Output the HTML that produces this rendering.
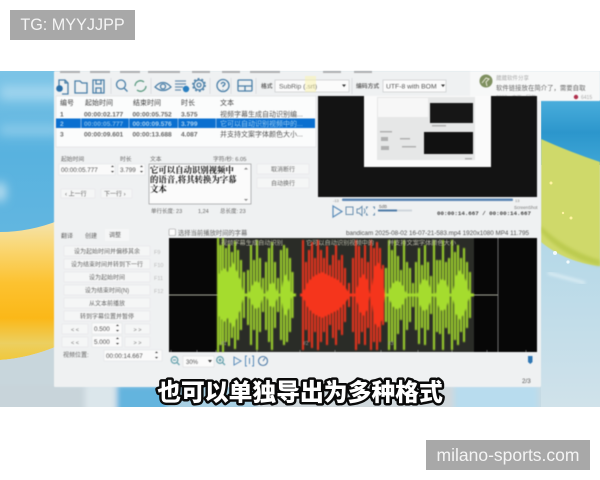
<!DOCTYPE html>
<html><head><meta charset="utf-8"><style>
html,body{margin:0;padding:0;background:#fff}
body{width:600px;height:480px;overflow:hidden;position:relative;font-family:"Liberation Sans","Noto Sans CJK SC",sans-serif}
.wm{position:absolute;background:#a8a8a8;color:#f4f4f4;font-size:17.5px;line-height:30px;height:30px;text-align:center}
svg{position:absolute;left:0;top:0}
text{font-family:"Liberation Sans","Noto Sans CJK SC",sans-serif;fill:#444;font-size:7px}
.m{font-size:6.6px;fill:#666;font-weight:bold}
.btn{fill:#f5f6f6;stroke:#e6e7e8;stroke-width:.6}
.ic{fill:none;stroke:#4a7fa8;stroke-width:1.3}
#win{filter:blur(.5px)}
</style></head><body>
<svg width="600" height="480" viewBox="0 0 600 480">
<defs>
<filter id="b6"><feGaussianBlur stdDeviation="5"/></filter>
<filter id="b3"><feGaussianBlur stdDeviation="3"/></filter>
<filter id="b2"><feGaussianBlur stdDeviation="1.5"/></filter>
<filter id="b1"><feGaussianBlur stdDeviation=".5"/></filter>
<clipPath id="band"><rect x="0" y="71" width="600" height="336"/></clipPath>
<linearGradient id="sky" x1="0" y1="0" x2="0" y2="1"><stop offset="0" stop-color="#7cc4e6"/><stop offset=".5" stop-color="#58b2df"/><stop offset="1" stop-color="#62b6e0"/></linearGradient>
<linearGradient id="or" x1="0" y1="0" x2="0" y2="1"><stop offset="0" stop-color="#f4e4b0"/><stop offset=".18" stop-color="#f9d878"/><stop offset=".45" stop-color="#fcc230"/><stop offset=".7" stop-color="#fbb818"/><stop offset=".88" stop-color="#eccf60"/><stop offset="1" stop-color="#f0c83c"/></linearGradient>
<linearGradient id="pale" x1="0" y1="0" x2="0" y2="1"><stop offset="0" stop-color="#b4d8e8"/><stop offset="1" stop-color="#d0e2ea"/></linearGradient>
<linearGradient id="bt" x1="0" y1="0" x2="0" y2="1"><stop offset="0" stop-color="#4aaedc"/><stop offset=".5" stop-color="#2c96cc"/><stop offset="1" stop-color="#3ea6d6"/></linearGradient>
</defs>
<g clip-path="url(#band)">
<rect x="0" y="71" width="600" height="336" fill="#cfe0ea"/>
<rect x="0" y="71" width="60" height="165" fill="url(#sky)"/>
<g filter="url(#b6)">
<path d="M0 85H60V100H0Z" fill="#9ed4ee"/>
<path d="M0 125H60V135H0Z" fill="#8bcbea"/>
<ellipse cx="0" cy="192" rx="6" ry="10" fill="#bfe0f0"/>
</g>
<path d="M0 232Q30 232 60 220V345Q30 358 0 360Z" fill="url(#or)"/>
<path d="M0 360Q30 358 60 345V407H0Z" fill="#c8d6dc"/>
<g filter="url(#b3)">
<rect x="-10" y="385" width="95" height="30" fill="#c8d4da"/>
<rect x="85" y="385" width="30" height="30" fill="#dbe6eb"/>
<rect x="117" y="385" width="50" height="30" fill="#64b4de"/>
<rect x="167" y="385" width="90" height="30" fill="#a8cfe2"/>
<rect x="257" y="385" width="197" height="30" fill="#d0d8dc"/>
<rect x="454" y="385" width="84" height="30" fill="#b8dcee"/>
<rect x="538" y="385" width="70" height="30" fill="#c8dae2"/>
</g>
<rect x="541" y="100" width="59" height="65" fill="url(#bt)"/>
<rect x="541" y="240" width="59" height="167" fill="url(#pale)"/>
<path d="M541 139Q570 152 600 162V266Q565 262 541 242Z" fill="#cfd96a" filter="url(#b1)"/>
<path d="M541 232Q565 258 600 266V260Q565 250 541 226Z" fill="#bccb50" filter="url(#b2)"/>
<path d="M548 273L585 283" stroke="#e8f4f8" stroke-width="2" filter="url(#b2)"/>
<circle cx="551" cy="183" r="1.500" fill="#fff3a0"/><circle cx="571" cy="218" r="1.500" fill="#fff3a0"/><circle cx="563" cy="213" r="1.200" fill="#fff3a0"/>
<circle cx="555" cy="253" r="2" fill="#f2fafc"/><circle cx="568" cy="262" r="1.600" fill="#f2fafc"/>
</g>

<g id="win">
<rect x="54" y="71" width="487" height="316" rx="1" fill="#eff1f2"/>
<rect x="470" y="71" width="130" height="30" fill="#f7f8f8"/>

<!-- menu remnants -->
<g fill="#888" opacity=".6"><rect x="60" y="71" width="20" height="2"/><rect x="90" y="71" width="20" height="2"/><rect x="120" y="71" width="20" height="2"/><rect x="148" y="71" width="32" height="2"/><rect x="192" y="71" width="18" height="2"/><rect x="222" y="71" width="18" height="2"/><rect x="250" y="71" width="30" height="2"/><rect x="323" y="71" width="18" height="2"/><rect x="354" y="71" width="18" height="2"/></g>

<!-- toolbar icons -->
<g class="ic">
<path d="M59 90V80h6l3 3v11h-6"/><path d="M65 80v3h3"/>
<path d="M75 93V81h5l2 2h5v10z"/>
<path d="M93 80h11v13H93z M96 80v4h5v-4 M96 93v-5h5v5"/>
<circle cx="121" cy="84.500" r="4.500"/><path d="M124 88l3.500 3.500"/>
<path d="M135 86a5.500 5.500 0 0 1 9-4M146 86a5.500 5.500 0 0 1-9 4" stroke="#5a9a80"/>
<path d="M155 87q8-9 16 0q-8 7-16 0z"/><circle cx="163" cy="86.500" r="2.500"/>
<path d="M175 81h11M175 84h11M175 87h8M175 90h6" stroke="#6a90ae"/>
<circle cx="199" cy="85" r="5"/><circle cx="199" cy="85" r="2"/><circle cx="199" cy="85" r="6.300" stroke-dasharray="2 2"/>
<circle cx="223" cy="85.500" r="6"/><path d="M221 84q2-3 4-.500q0 1.500-2 2.500v1M223 89.500v.6"/>
<rect x="238" y="80" width="14" height="11" rx="1"/><path d="M238 86h14M245 86v5"/>
</g>
<circle cx="59.500" cy="88.500" r="3.300" fill="#2a6fa8"/>
<circle cx="186" cy="89" r="3.200" fill="#2a7fc0"/>
<path d="M111 78v16M151 78v16M210 78v16M231 78v16M256 78v16M352 78v16" stroke="#d5d8da" stroke-width=".7"/>

<text x="261" y="88" class="m" style="font-size:5.800px">格式</text>
<rect x="275" y="80" width="74" height="12" fill="#fbfbfb" stroke="#c8cacc" stroke-width=".7"/>
<text x="279" y="88.500" style="font-size:6.800px;fill:#666">SubRip (.srt)</text>
<rect x="305" y="76" width="11" height="16" fill="#fbf3a8" opacity=".5"/>
<path d="M342 84.500h4l-2 2.500z" fill="#333"/>
<text x="356" y="88" class="m" style="font-size:5.800px">编码方式</text>
<rect x="383" y="80" width="63" height="12" fill="#fbfbfb" stroke="#c8cacc" stroke-width=".7"/>
<text x="386" y="88.500" style="font-size:6.800px;fill:#555">UTF-8 with BOM</text>
<path d="M441 84.500h4l-2 2.500z" fill="#333"/>

<!-- post overlay -->
<circle cx="486" cy="81" r="6.500" fill="#7f9060"/>
<path d="M482 83l4-5 3 1-3 3 1 4" stroke="#e8e8d8" stroke-width="1" fill="none"/>
<text x="496" y="80" style="font-size:5.500px;fill:#aaa">葳葳软件分享</text>
<text x="496" y="90" style="font-size:6.400px;fill:#666">软件链接放在简介了，需要自取</text>
<text x="496" y="99" style="font-size:5px;fill:#bbb">2008 · 广西 · 回复</text>
<circle cx="576" cy="97" r="2.200" fill="#b0304c"/>
<text x="581" y="99" style="font-size:5px;fill:#aaa">6415</text>

<!-- table -->
<rect x="56" y="96" width="260" height="51" fill="#fbfcfc" stroke="#dcdee0" stroke-width=".6"/>
<text x="60" y="105" style="font-size:7px">编号</text><text x="85" y="105" style="font-size:7px">起始时间</text><text x="133" y="105" style="font-size:7px">结束时间</text><text x="181" y="105" style="font-size:7px">时长</text><text x="220" y="105" style="font-size:7px">文本</text>
<text x="60" y="116.500" class="m">1</text><text x="84" y="116.500" class="m">00:00:02.177</text><text x="132.500" y="116.500" class="m">00:00:05.752</text><text x="181" y="116.500" class="m">3.575</text><text x="220" y="116.500" style="font-size:7px;fill:#555">视频字幕生成自动识别编...</text>
<rect x="56" y="118.500" width="259" height="9.500" fill="#0a6fd0"/>
<path d="M81 118.500v9.500M129 118.500v9.500M178 118.500v9.500M216 118.500v9.500" stroke="#cfe2f4" stroke-width=".6"/>
<text x="60" y="126" class="m" style="fill:#9cc8ee">2</text><text x="84" y="126" class="m" style="fill:#7ab6e8">00:00:05.777</text><text x="132.500" y="126" class="m" style="fill:#a8d0f0">00:00:09.576</text><text x="181" y="126" class="m" style="fill:#a8d0f0">3.799</text><text x="220" y="126" style="font-size:7px;fill:#9accf2">它可以自动识别视频中的...</text>
<text x="60" y="136.500" class="m">3</text><text x="84" y="136.500" class="m">00:00:09.601</text><text x="132.500" y="136.500" class="m">00:00:13.688</text><text x="181" y="136.500" class="m">4.087</text><text x="220" y="136.500" style="font-size:7px;fill:#555">并支持文案字体颜色大小...</text>

<!-- edit area -->
<text x="61" y="161" style="font-size:5.800px;fill:#666">起始时间</text>
<text x="120" y="161" style="font-size:5.800px;fill:#666">时长</text>
<text x="150" y="161" style="font-size:5.800px;fill:#666">文本</text>
<text x="213" y="161" style="font-size:5.800px;fill:#666">字符/秒: 6.05</text>
<rect x="59" y="164" width="56" height="11" fill="#fafafa" stroke="#dfe1e2" stroke-width=".5"/>
<text x="61" y="171.800" style="font-size:6.300px;fill:#555">00:00:05.777</text>
<path d="M111 167l1.500-1.500 1.500 1.500zM111 171h3l-1.500 1.500z" fill="#333"/>
<rect x="118" y="164" width="27" height="11" fill="#fafafa" stroke="#dfe1e2" stroke-width=".5"/>
<text x="120" y="171.800" style="font-size:6.300px;fill:#555">3.799</text>
<path d="M140 167l1.500-1.500 1.500 1.500zM140 171h3l-1.500 1.500z" fill="#333"/>
<rect x="149" y="164" width="102" height="40" fill="#fbfbfb" stroke="#8a8c8e" stroke-width=".6"/>
<text x="150" y="173" style="font-size:8.400px;fill:#111;font-family:'Noto Serif CJK SC',serif;font-weight:bold">它可以自动识别视频中</text>
<text x="150" y="182.500" style="font-size:8.400px;fill:#111;font-family:'Noto Serif CJK SC',serif;font-weight:bold">的语音,将其转换为字幕</text>
<text x="150" y="192" style="font-size:8.400px;fill:#111;font-family:'Noto Serif CJK SC',serif;font-weight:bold">文本</text>
<path d="M244 169.500h4l-2-2zM244 199h4l-2 2z" fill="#888"/>
<text x="151" y="213" style="font-size:5.500px;fill:#666">单行长度: 23</text><text x="198" y="213" style="font-size:5.500px;fill:#666">1,24</text><text x="220" y="213" style="font-size:5.500px;fill:#666">总长度: 23</text>
<rect x="61" y="189" width="34" height="9" class="btn"/><text x="65" y="196" style="font-size:6px;fill:#666">‹ 上一行</text>
<rect x="101" y="189" width="31" height="9" class="btn"/><text x="104" y="196" style="font-size:6px;fill:#666">下一行 ›</text>
<rect x="257" y="164" width="52" height="10" class="btn"/><text x="271" y="171.500" style="font-size:6px;fill:#666">取消断行</text>
<rect x="257" y="178" width="52" height="10" class="btn"/><text x="271" y="185.500" style="font-size:6px;fill:#666">自动换行</text>

<!-- video -->
<rect x="318" y="96" width="219" height="101" fill="#131313"/>
<rect x="364" y="96" width="127" height="71" fill="#fafafa"/>
<rect x="377" y="97" width="98" height="63" fill="#e6e7e7"/>
<rect x="378" y="98" width="50" height="19" fill="#f7f7f7"/>
<rect x="430" y="103" width="43" height="20" fill="#161616"/>
<rect x="424" y="132" width="49" height="22" fill="#111"/>
<g fill="#b0b0b0"><rect x="380" y="131" width="12" height="1.500"/><rect x="381" y="137" width="7" height="4"/><rect x="381" y="146" width="8" height="4"/><rect x="400" y="138" width="10" height="1.500"/><rect x="402" y="146" width="14" height="1.500"/><rect x="432" y="125" width="14" height="1.500"/><rect x="465" y="158" width="7" height="1.500"/></g>

<text x="333" y="202" style="font-size:4px;fill:#888">-13</text>
<rect x="342" y="198.500" width="171" height="2.500" rx="1" fill="#5b86b4"/>
<text x="515" y="202" style="font-size:4px;fill:#888">13</text>
<path d="M333 206l9 5.500-9 5.500z" fill="none" stroke="#5a8cba" stroke-width="1.200"/>
<rect x="346" y="207" width="7" height="7.500" fill="none" stroke="#6a90b0" stroke-width="1"/>
<path d="M357 209h2l3-2.500v9l-3-2.500h-2z M364 208.500q2 2.500 0 5" fill="none" stroke="#6a90b0" stroke-width="1"/>
<path d="M368 207h-1.500v2M373 207h1.500v2M368 215h-1.500v-2M373 215h1.500v-2" fill="none" stroke="#6a90b0" stroke-width="1"/>
<text x="379" y="208" style="font-size:4.500px;fill:#666">5dB</text>
<rect x="378" y="209.500" width="34" height="2" fill="#cfd6dc"/><rect x="378" y="209.500" width="19" height="2" fill="#4f7ca8"/>
<text x="514" y="209" style="font-size:4.500px;fill:#777">ScreenShot</text>
<text x="437" y="215" style="font-size:5.800px;fill:#444;font-weight:bold;font-family:'Liberation Mono',monospace">00:00:14.667 / 00:00:14.667</text>

<!-- waveform head -->
<rect x="169" y="229" width="6.500" height="6.500" rx="1" fill="#fdfdfd" stroke="#999" stroke-width=".6"/>
<text x="178" y="235" style="font-size:6.300px;fill:#666">选择当前播放时间的字幕</text>
<text x="346" y="235" style="font-size:6.300px;fill:#555">bandicam 2025-08-02 16-07-21-583.mp4 1920x1080 MP4 11.795</text>

<!-- tabs -->
<text x="61" y="238" style="font-size:6px;fill:#666">翻译</text>
<text x="85" y="238" style="font-size:6px;fill:#666">创建</text>
<rect x="105" y="229" width="24" height="12" fill="#f5f6f6"/>
<text x="109" y="237" style="font-size:6px;fill:#666">调整</text>
<rect x="64" y="246" width="86" height="10" class="btn"/><text x="107" y="253.300" text-anchor="middle" style="font-size:6px;fill:#666">设为起始时间并偏移其余</text><text x="154" y="254" style="font-size:5.500px;fill:#bbb">F9</text>
<rect x="64" y="259" width="86" height="10" class="btn"/><text x="107" y="266.300" text-anchor="middle" style="font-size:6px;fill:#666">设为结束时间并转到下一行</text><text x="154" y="267" style="font-size:5.500px;fill:#bbb">F10</text>
<rect x="64" y="272" width="86" height="10" class="btn"/><text x="107" y="279.300" text-anchor="middle" style="font-size:6px;fill:#666">设为起始时间</text><text x="154" y="280" style="font-size:5.500px;fill:#bbb">F11</text>
<rect x="64" y="285" width="86" height="10" class="btn"/><text x="107" y="292.300" text-anchor="middle" style="font-size:6px;fill:#666">设为结束时间(N)</text><text x="154" y="293" style="font-size:5.500px;fill:#bbb">F12</text>
<rect x="64" y="298" width="86" height="10" class="btn"/><text x="107" y="305.300" text-anchor="middle" style="font-size:6px;fill:#666">从文本前播放</text>
<rect x="64" y="311" width="86" height="10" class="btn"/><text x="107" y="318.300" text-anchor="middle" style="font-size:6px;fill:#666">转到字幕位置并暂停</text>
<rect x="62" y="324" width="26" height="10" class="btn"/><text x="75" y="331.500" text-anchor="middle" style="font-size:5.500px;fill:#777">&lt; &lt;</text>
<rect x="92" y="323" width="30" height="11" fill="#fafafa" stroke="#dfe1e2" stroke-width=".5"/><text x="94" y="331" style="font-size:6.300px;fill:#555">0.500</text>
<path d="M116 326l1.500-1.500 1.500 1.500zM116 330h3l-1.500 1.500z" fill="#333"/>
<rect x="125" y="324" width="25" height="10" class="btn"/><text x="137.500" y="331.500" text-anchor="middle" style="font-size:5.500px;fill:#777">&gt; &gt;</text>
<rect x="62" y="337" width="26" height="10" class="btn"/><text x="75" y="344.500" text-anchor="middle" style="font-size:5.500px;fill:#777">&lt; &lt;</text>
<rect x="92" y="336" width="30" height="11" fill="#fafafa" stroke="#dfe1e2" stroke-width=".5"/><text x="94" y="344" style="font-size:6.300px;fill:#555">5.000</text>
<path d="M116 339l1.500-1.500 1.500 1.500zM116 343h3l-1.500 1.500z" fill="#333"/>
<rect x="125" y="337" width="25" height="10" class="btn"/><text x="137.500" y="344.500" text-anchor="middle" style="font-size:5.500px;fill:#777">&gt; &gt;</text>
<text x="63" y="357" style="font-size:6px;fill:#666">视频位置:</text>
<rect x="104" y="350" width="58" height="11" fill="#fafafa" stroke="#dfe1e2" stroke-width=".5"/><text x="106" y="358" style="font-size:6.300px;fill:#555">00:00:14.667</text>
<path d="M155 353l1.500-1.500 1.500 1.500zM155 357h3l-1.500 1.500z" fill="#333"/>

<!-- waveform -->
<rect x="169" y="238" width="368" height="114" fill="#070707"/>
<rect x="218" y="238" width="256" height="114" fill="#2a2c27"/>
<path d="M169 295H218M472 295H498" stroke="#a5a89a" stroke-width="1"/>
<path d="M498 238V352" stroke="#888" stroke-width=".8"/>
<g filter="url(#b1)">
<path d="M218 238V352M220.500 245V345M223 238V352M226 248V342M229 244V346M232 252V338M235 241V349M238 250V340M241 260V330M244 272V318M248 270V325M251 245V345M254 260V330M257 240V350M260 258V332M263 278V312M266 262V330M269 248V342M272 242V350M275 262V328M278 278V312M281 250V340M284 245V345M287 248V342M290 258V332M292.500 272V318" stroke="#a5dc2e" stroke-width="2"/>
<path d="M218 275L224 268 228 272 233 262 237 272 241 282 244 295 241 308 237 318 233 328 228 318 224 322 218 315Z" fill="#a5dc2e"/>
<path d="M248 295L253 284 257 280 261 286 263 295 261 304 257 310 253 306ZM266 295L270 284 273 282 276 288 278 295 276 302 273 308 270 306ZM281 295L283 280 286 274 289 282 292 295 289 308 286 316 283 310Z" fill="#a5dc2e"/>
<path d="M245 295H296" stroke="#a5dc2e" stroke-width="3"/>
<path d="M303 240V350M306 262V330M309 250V342M312 242V348M315 258V332M318 240V350M321 250V342M324 258V332M327 246V345M330 265V325M333 255V338M336 245V345M339 260V330M342 255V335M345 268V322M349 283V307M353 258V332M356 240V350M359 246V344M362 258V332M365 245V345M368 262V328M371 240V350M374 248V342M377 242V350M380 248V342M383 265V325" stroke="#f5361c" stroke-width="2"/>
<path d="M302 295L308 282 314 276 322 272 330 276 338 280 346 288 350 295 346 302 338 310 330 314 322 318 314 314 308 308Z M355 295L360 278 364 274 368 282 370 295 368 308 364 316 360 312ZM371 295L374 268 378 262 382 270 385 295 382 320 378 328 374 322Z" fill="#f5361c"/>
<path d="M300 295H386" stroke="#f5361c" stroke-width="3"/>
<path d="M386 268V322M389 240V350M392 250V342M395 240V350M398 256V334M401 270V320M404 240V350M407 262V330M410 268V322M413 283V307M416 262V330M419 248V344M422 265V328M425 245V345M428 262V330M431 276V314M434 240V350M437 260V332M440 260V334M443 240V350M446 262V328M449 258V334M452 240V350M455 252V340M458 245V345M461 258V332M464 248V342M467 262V328M470 272V318" stroke="#a5dc2e" stroke-width="2"/>
<path d="M388 295L392 284 398 280 403 286 407 295 403 304 398 310 392 306ZM417 295L421 282 425 278 429 284 432 295 429 306 425 312 421 308ZM435 295L439 282 443 278 447 284 450 295 447 306 443 312 439 308ZM452 295L456 276 460 270 465 278 470 295 465 312 460 320 456 314Z" fill="#a5dc2e"/>
<path d="M386 295H474" stroke="#a5dc2e" stroke-width="3"/>
</g>
<text x="221" y="245" style="font-size:6.200px;fill:#b8b8a8">视频字幕生成自动识别</text>
<text x="306" y="245" style="font-size:6.200px;fill:#b8b8a8">它可以自动识别视频中的</text>
<text x="388" y="245" style="font-size:6.200px;fill:#b8b8a8">并支持文案字体颜色大小</text>
<text x="221" y="345" style="font-size:5px;fill:#999">#1</text><text x="303" y="345" style="font-size:5px;fill:#999">#2</text><text x="388" y="345" style="font-size:5px;fill:#999">#3</text>
<path d="M171 352v-2M197 352v-2M216 352v-2M257 352v-2M300 352v-2M335 352v-2M381 352v-2M418 352v-2M452 352v-2M487 352v-2M526 352v-2" stroke="#999" stroke-width=".6"/>

<!-- bottom bar -->
<g class="ic" style="stroke:#6ba5b0">
<circle cx="174.500" cy="360" r="3.300"/><path d="M177 362.500l2.500 2.500M173 360h3"/>
<circle cx="220" cy="360" r="3.300"/><path d="M222.500 362.500l2.500 2.500M218.500 360h3M220 358.500v3"/>
</g>
<rect x="183" y="356" width="31" height="11" fill="#fbfbfb" stroke="#dcdee0" stroke-width=".6"/>
<text x="186" y="364" style="font-size:6px;fill:#555">30%</text>
<path d="M208 360h4l-2 2.500z" fill="#333"/>
<path d="M234 357l7 4-7 4z" fill="none" stroke="#5a8cba" stroke-width="1"/>
<path d="M247 356h-1.500v10h1.500M252 356h1.500v10h-1.500M249.500 358v6" fill="none" stroke="#5a8cba" stroke-width="1"/>
<circle cx="263" cy="361" r="4.500" fill="none" stroke="#4f7ca8" stroke-width="1.100"/><path d="M263 361l2-3" stroke="#4f7ca8" stroke-width="1"/>
<path d="M528 356h4.500v6l-2.200 2-2.300-2z" fill="#2f77b4"/>
<text x="522" y="383" style="font-size:6.300px;fill:#555">2/3</text>
</g>
<text x="300" y="400.500" text-anchor="middle" style="font-family:'Noto Sans CJK SC',sans-serif;font-size:23.800px;font-weight:900;fill:#fff;stroke:#0a0a0a;stroke-width:5px;paint-order:stroke;stroke-linejoin:round">也可以单独导出为多种格式</text>
</svg>
<div class="wm" style="left:10px;top:10px;width:125px;font-size:16.200px">TG: MYYJJPP</div>
<div class="wm" style="left:426px;top:440px;width:164px">milano-sports.com</div>
</body></html>
